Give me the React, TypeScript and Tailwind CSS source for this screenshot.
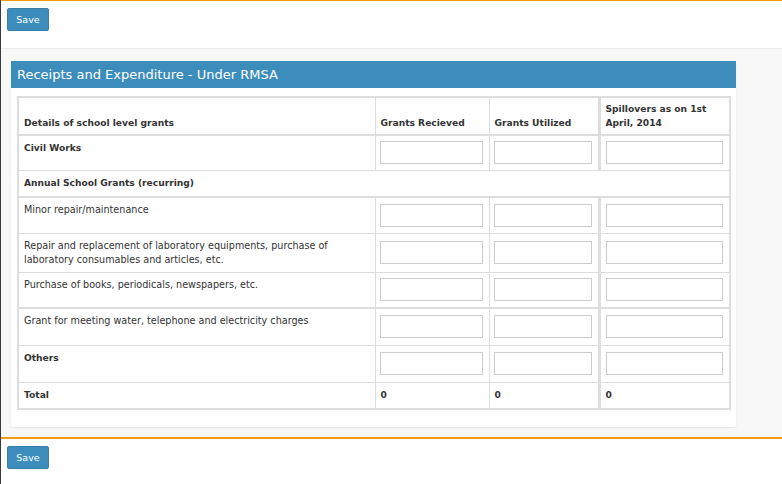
const rows: { label: string; bold?: boolean; h: string; section?: boolean; thickTop?: boolean }[] = [
  { label: "Civil Works", bold: true, h: "h-[35px]" },
  { label: "Annual School Grants (recurring)", bold: true, section: true, h: "h-[27px]" },
  { label: "Minor repair/maintenance", thickTop: true, h: "h-[36px]" },
  { label: "Repair and replacement of laboratory equipments, purchase of laboratory consumables and articles, etc.", h: "h-[39px]" },
  { label: "Purchase of books, periodicals, newspapers, etc.", h: "h-[36px]" },
  { label: "Grant for meeting water, telephone and electricity charges", thickTop: true, h: "h-[37px]" },
  { label: "Others", bold: true, h: "h-[37px]" },
];

function SaveButton() {
  return (
    <button
      type="button"
      className="block h-[23px] w-[42px] rounded-[2px] border border-[#367fa9] bg-[#3c8dbc] text-[9.5px] leading-none text-white"
    >
      Save
    </button>
  );
}

function Field() {
  return <input type="text" className="block h-[23px] w-full border border-[#ccc] bg-white outline-none" />;
}

export default function App() {
  return (
    <div
      className="flex h-[484px] flex-col border-l border-[#3a3a3a] bg-white text-[#333]"
      style={{ fontFamily: '"DejaVu Sans", Verdana, sans-serif' }}
    >
      <div className="flex h-[48px] items-start border-t border-t-[#f39c12] px-[6px] pt-[7px]">
        <SaveButton />
      </div>

      <div className="h-[389px] border-t border-t-[#ececec] bg-[#f8f8f8] pl-[10px] pt-[12px]">
        <div className="w-[725px] rounded-[2px] bg-white pb-[17px] shadow-[0_1px_2px_rgba(0,0,0,0.08)]">
          <div className="flex h-[27px] items-center bg-[#3c8dbc] px-[6px] text-[13px] text-white">
            Receipts and Expenditure - Under RMSA
          </div>

          <div className="px-[6px] pt-[8px]">
            <table className="w-[712px] table-fixed border-collapse border-2 border-[#ddd] text-[9.65px] leading-[14px]">
              <colgroup>
                <col className="w-[357px]" />
                <col className="w-[114px]" />
                <col className="w-[110px]" />
                <col className="w-[131px]" />
              </colgroup>
              <thead>
                <tr className="h-[38px] border-b-2 border-[#ddd] text-[9.15px] font-bold">
                  <th className="border border-[#ddd] px-[5px] pb-[4px] text-left align-bottom">Details of school level grants</th>
                  <th className="border border-[#ddd] px-[5px] pb-[4px] text-left align-bottom">Grants Recieved</th>
                  <th className="border border-[#ddd] px-[5px] pb-[4px] text-left align-bottom">Grants Utilized</th>
                  <th className="border border-[#ddd] border-l-[3px] px-[5px] pb-[4px] text-left align-bottom">
                    Spillovers as on 1st April, 2014
                  </th>
                </tr>
              </thead>
              <tbody>
                {rows.map((r) =>
                  r.section ? (
                    <tr key={r.label} className={`${r.h} border-b-2 border-[#ddd]`}>
                      <td colSpan={4} className="px-[5px] align-middle text-[9.15px] font-bold">
                        {r.label}
                      </td>
                    </tr>
                  ) : (
                    <tr key={r.label} className={`${r.h} ${r.thickTop ? "border-t-2" : "border-t"} border-[#ddd]`}>
                      <td
                        className={`border border-[#ddd] px-[5px] pt-[5px] align-top ${r.bold ? "text-[9.15px] font-bold" : ""}`}
                      >
                        {r.label}
                      </td>
                      <td className="border border-[#ddd] pl-[4px] pr-[6px] align-middle">
                        <Field />
                      </td>
                      <td className="border border-[#ddd] pl-[4px] pr-[6px] align-middle">
                        <Field />
                      </td>
                      <td className="border border-[#ddd] border-l-[3px] pl-[5px] pr-[6px] align-middle">
                        <Field />
                      </td>
                    </tr>
                  )
                )}
                <tr className="h-[27px] border-t border-[#ddd] text-[9.15px] font-bold">
                  <td className="border border-[#ddd] px-[5px] align-middle">Total</td>
                  <td className="border border-[#ddd] px-[5px] align-middle">0</td>
                  <td className="border border-[#ddd] px-[5px] align-middle">0</td>
                  <td className="border border-[#ddd] border-l-[3px] px-[5px] align-middle">0</td>
                </tr>
              </tbody>
            </table>
          </div>
        </div>
      </div>

      <div className="h-[2px] border-t border-[#f39c12] bg-[#f39c12]" />
      <div className="flex flex-1 items-start px-[6px] pt-[7px]">
        <SaveButton />
      </div>
    </div>
  );
}
